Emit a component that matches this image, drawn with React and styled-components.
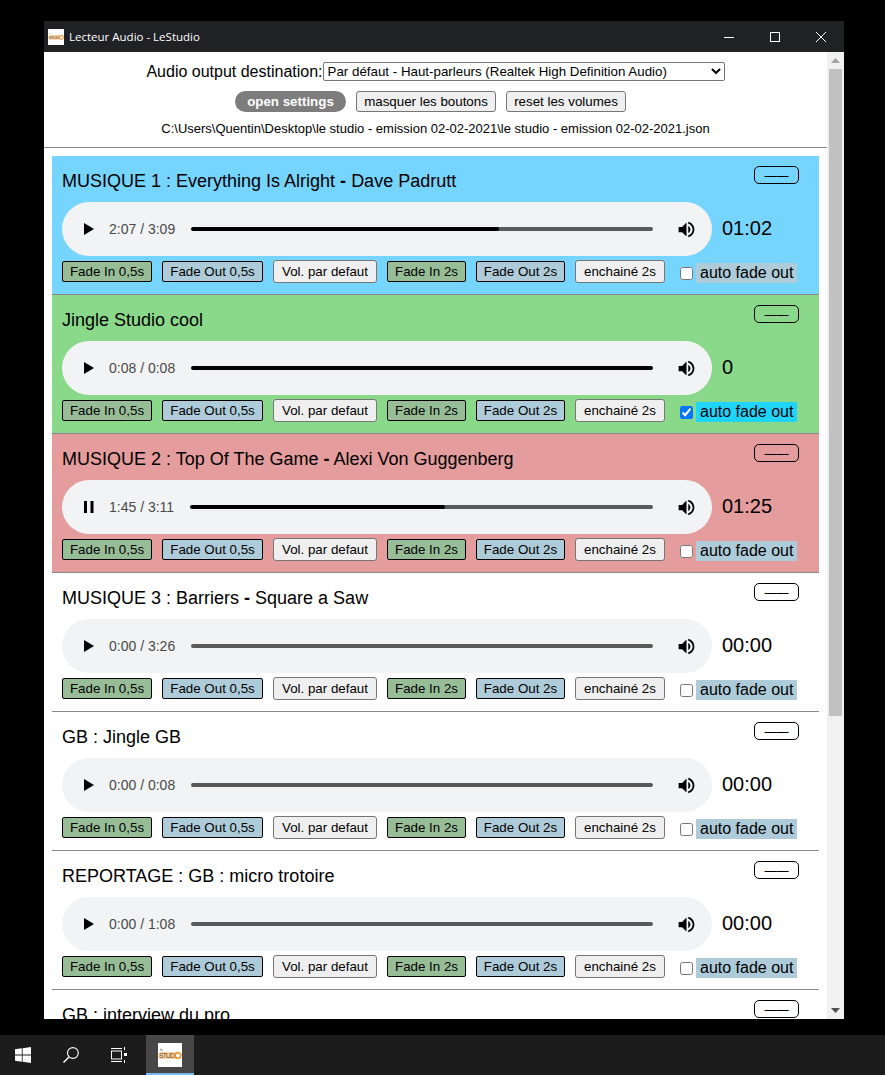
import React from 'react'
import styled, { createGlobalStyle } from 'styled-components'

const Global = createGlobalStyle`
html, body {
    margin: 0;
    padding: 0;
    background: #000;
    overflow: hidden;
}
* { box-sizing: border-box; }
`;

const Screen = styled.div`
width: 885px;
height: 1075px;
display: flex;
flex-direction: column;
background: #000;
font-family: "Liberation Sans", Arial, sans-serif;
color: #000;
`;

const Desktop = styled.div`
flex: 1;
min-height: 0;
padding: 21px 41px 16px 44px;
`;

const Win = styled.div`
height: 100%;
display: flex;
flex-direction: column;
background: #fff;
overflow: hidden;
`;

const TitleBar = styled.div`
height: 31px;
flex: none;
display: flex;
align-items: center;
padding-left: 4px;
background: #202124;
color: #fff;
font-family: "Open Sans", "Noto Sans", sans-serif;
font-size: 11.5px;
`;

const TitleText = styled.span`
margin-left: 5px;
flex: 1;
`;

const WinBtn = styled.div`
width: 46px;
height: 31px;
display: flex;
align-items: center;
justify-content: center;
`;

const LogoBox = styled.div`
width: ${p => p.$size}px;
height: ${p => p.$size}px;
background: #fff;
display: block;
flex: none;
`;

const Body = styled.div`
flex: 1;
min-height: 0;
display: flex;
`;

const Content = styled.div`
flex: 1;
min-width: 0;
overflow: hidden;
`;

const Header = styled.div`
display: flex;
flex-direction: column;
align-items: center;
padding-top: 10px;
height: 96px;
border-bottom: 1px solid #888;
`;

const OutputRow = styled.div`
display: flex;
align-items: center;
height: 19px;
font-size: 16px;
`;

const OutputSelect = styled.select`
width: 402px;
height: 19px;
font-family: "Liberation Sans", Arial, sans-serif;
font-size: 13.333px;
background: #fff;
border: 1px solid #767676;
border-radius: 2px;
padding: 0;
`;

const TopButtons = styled.div`
display: flex;
gap: 10px;
margin-top: 10px;
margin-right: 10px;
height: 21px;
`;

const SettingsBtn = styled.button`
width: 111px;
height: 21px;
padding: 0;
border: 0;
border-radius: 11px;
background: #7d7d7d;
color: #fff;
font-family: inherit;
font-size: 13.333px;
font-weight: bold;
`;

const GreyBtn = styled.button`
width: ${p => p.$w}px;
padding: 0;
height: ${p => p.$tall ? 23 : 21}px;
border: 1px solid #767676;
border-radius: 3px;
background: #efefef;
color: #000;
font-family: inherit;
font-size: 13.333px;
white-space: nowrap;
`;

const PathLine = styled.div`
margin-top: 10px;
font-size: 13px;
line-height: 14px;
white-space: nowrap;
`;

const List = styled.div`
padding: 8px 8px 0;
`;

const Track = styled.section`
height: 139px;
padding: 10px 20px 0 10px;
background: ${p => p.$bg || 'transparent'};
border-bottom: 1px solid #888;
`;

const TrackHead = styled.div`
display: flex;
justify-content: space-between;
height: 36px;
`;

const TrackTitle = styled.div`
padding-top: 5px;
font-size: 18px;
line-height: 21px;
`;

const Dash = styled.b`
font-weight: bold;
`;

const Collapse = styled.button`
width: 45px;
height: 18px;
padding: 1px 0 0;
background: transparent;
border: 1px solid #000;
border-radius: 5px;
color: #000;
font-family: inherit;
font-size: 12px;
line-height: 14px;
`;

const PlayerRow = styled.div`
display: flex;
align-items: center;
gap: 10px;
`;

const Player = styled.div`
width: 650px;
height: 54px;
display: flex;
align-items: center;
padding: 0 15px 0 21px;
border-radius: 27px;
background: #f1f3f4;
`;

const TimeText = styled.span`
margin-left: 14px;
font-size: 14px;
color: #4a4a4a;
white-space: nowrap;
`;

const Bar = styled.div`
flex: 1;
height: 4px;
margin: 0 23px 0 16px;
border-radius: 2px;
background: #595959;
overflow: hidden;
`;

const BarFill = styled.div`
height: 100%;
width: ${p => p.$value}%;
background: #000;
border-radius: 2px;
`;

const Elapsed = styled.div`
font-size: 20px;
margin-top: -2px;
`;

const Controls = styled.div`
display: flex;
align-items: center;
gap: 10px;
height: 23px;
margin-top: 4px;
`;

const FadeBtn = styled.button`
width: ${p => p.$w}px;
height: 21px;
padding: 0;
border: 1px solid #000;
border-radius: 2px;
background: ${p => p.$kind === 'in' ? '#97bd97' : '#aecbd9'};
color: #000;
font-family: inherit;
font-size: 13.333px;
white-space: nowrap;
`;

const AutoFade = styled.label`
display: flex;
align-items: center;
padding-top: 2px;
`;

const Check = styled.input`
width: 13px;
height: 13px;
margin: 2px 3px 0 5px;
`;

const AutoText = styled.span`
height: 20px;
padding: 0 4px;
font-size: 16px;
line-height: 20px;
white-space: nowrap;
background: ${p => p.$on ? '#1fd5ff' : '#aecbd9'};
`;

const Scrollbar = styled.div`
width: 17px;
flex: none;
display: flex;
flex-direction: column;
background: #f1f1f1;
`;

const ScrollArrow = styled.div`
height: 17px;
flex: none;
display: flex;
align-items: center;
justify-content: center;
`;

const ScrollTrack = styled.div`
flex: 1;
padding: 0 2px;
`;

const ScrollThumb = styled.div`
height: 647px;
background: #c1c1c1;
`;

const Taskbar = styled.div`
height: 40px;
flex: none;
display: flex;
background: #1c1c1c;
`;

const TaskCell = styled.div`
width: 48px;
height: 40px;
padding-right: 2px;
display: flex;
align-items: center;
justify-content: center;
`;

const ActiveCell = styled(TaskCell)`
margin-left: 2px;
padding-right: 0;
background: #474747;
border-bottom: 2px solid #76b9ed;
padding-top: 2px;
`;

function Logo({ size }) {
    return (
        <LogoBox $size={size}>
            <svg width={size} height={size} viewBox="0 0 24 24">
                <rect x="0.5" y="9" width="20" height="7" rx="3" fill="#fbd3a8" />
                <text x="2" y="8" fontSize="3.5" fontFamily="Liberation Sans" fill="#555">le</text>
                <text x="1" y="15" fontSize="6.5" fontFamily="Liberation Sans" fill="#6b4a26" textLength="17">STUDI</text>
                <circle cx="20" cy="12.5" r="2.8" fill="#fff" stroke="#ef8f2c" strokeWidth="1.6" />
            </svg>
        </LogoBox>
    )
}

function PlayIcon({ playing }) {
    if (playing) {
        return (
            <svg width="12" height="14" viewBox="0 0 12 14">
                <rect x="1" y="1" width="3" height="12" fill="#000" />
                <rect x="7.5" y="1" width="3" height="12" fill="#000" />
            </svg>
        )
    }
    return (
        <svg width="12" height="14" viewBox="0 0 12 14">
            <polygon points="1,1 11,7 1,13" fill="#000" />
        </svg>
    )
}

function VolumeIcon() {
    return (
        <svg width="21" height="21" viewBox="0 0 24 24" fill="#000">
            <path d="M3 9v6h4l5 5V4L7 9H3zm13.5 3c0-1.77-1.02-3.29-2.5-4.03v8.05c1.48-.73 2.5-2.25 2.5-4.02zM14 3.23v2.06c2.89.86 5 3.54 5 6.71s-2.11 5.85-5 6.71v2.06c4.01-.91 7-4.49 7-8.77s-2.99-7.86-7-8.77z" />
        </svg>
    )
}

const tracks = [
    { before: 'MUSIQUE 1 : Everything Is Alright', after: 'Dave Padrutt', time: '2:07 / 3:09', progress: 66.7, elapsed: '01:02', bg: '#75d5ff' },
    { before: 'Jingle Studio cool', time: '0:08 / 0:08', progress: 100, elapsed: '0', bg: '#8ad98a', auto: true },
    { before: 'MUSIQUE 2 : Top Of The Game', after: 'Alexi Von Guggenberg', time: '1:45 / 3:11', progress: 55, elapsed: '01:25', bg: '#e49c9c', playing: true },
    { before: 'MUSIQUE 3 : Barriers', after: 'Square a Saw', time: '0:00 / 3:26', progress: 0, elapsed: '00:00' },
    { before: 'GB : Jingle GB', time: '0:00 / 0:08', progress: 0, elapsed: '00:00' },
    { before: 'REPORTAGE : GB : micro trotoire', time: '0:00 / 1:08', progress: 0, elapsed: '00:00' },
    { before: 'GB : interview du pro', time: '0:00 / 2:14', progress: 0, elapsed: '00:00' },
]

function TrackRow({ track }) {
    return (
        <Track $bg={track.bg}>
            <TrackHead>
                <TrackTitle>
                    {track.before}
                    {track.after && <> <Dash>-</Dash> {track.after}</>}
                </TrackTitle>
                <Collapse>——</Collapse>
            </TrackHead>
            <PlayerRow>
                <Player>
                    <PlayIcon playing={track.playing} />
                    <TimeText>{track.time}</TimeText>
                    <Bar><BarFill $value={track.progress} /></Bar>
                    <VolumeIcon />
                </Player>
                <Elapsed>{track.elapsed}</Elapsed>
            </PlayerRow>
            <Controls>
                <FadeBtn $kind="in" $w={90}>Fade In 0,5s</FadeBtn>
                <FadeBtn $kind="out" $w={101}>Fade Out 0,5s</FadeBtn>
                <GreyBtn $tall $w={104}>Vol. par defaut</GreyBtn>
                <FadeBtn $kind="in" $w={79}>Fade In 2s</FadeBtn>
                <FadeBtn $kind="out" $w={89}>Fade Out 2s</FadeBtn>
                <GreyBtn $tall $w={90}>enchainé 2s</GreyBtn>
                <AutoFade>
                    <Check type="checkbox" defaultChecked={!!track.auto} />
                    <AutoText $on={track.auto}>auto fade out</AutoText>
                </AutoFade>
            </Controls>
        </Track>
    )
}

export default function App() {
    return (
        <Screen>
            <Global />
            <Desktop>
                <Win>
                    <TitleBar>
                        <Logo size={16} />
                        <TitleText>Lecteur Audio - LeStudio</TitleText>
                        <WinBtn>
                            <svg width="10" height="10" viewBox="0 0 10 10"><path d="M0 5.5h10" stroke="#fff" /></svg>
                        </WinBtn>
                        <WinBtn>
                            <svg width="10" height="10" viewBox="0 0 10 10"><rect x=".5" y=".5" width="9" height="9" fill="none" stroke="#fff" /></svg>
                        </WinBtn>
                        <WinBtn>
                            <svg width="10" height="10" viewBox="0 0 10 10"><path d="M0 0l10 10M10 0L0 10" stroke="#fff" /></svg>
                        </WinBtn>
                    </TitleBar>
                    <Body>
                        <Content>
                            <Header>
                                <OutputRow>
                                    Audio output destination:
                                    <OutputSelect defaultValue="default">
                                        <option value="default">Par défaut - Haut-parleurs (Realtek High Definition Audio)</option>
                                    </OutputSelect>
                                </OutputRow>
                                <TopButtons>
                                    <SettingsBtn>open settings</SettingsBtn>
                                    <GreyBtn $w={140}>masquer les boutons</GreyBtn>
                                    <GreyBtn $w={120}>reset les volumes</GreyBtn>
                                </TopButtons>
                                <PathLine>C:\Users\Quentin\Desktop\le studio - emission 02-02-2021\le studio - emission 02-02-2021.json</PathLine>
                            </Header>
                            <List>
                                {tracks.map(t => <TrackRow key={t.before} track={t} />)}
                            </List>
                        </Content>
                        <Scrollbar>
                            <ScrollArrow>
                                <svg width="9" height="5" viewBox="0 0 9 5"><polygon points="4.5,0 9,5 0,5" fill="#a3a3a3" /></svg>
                            </ScrollArrow>
                            <ScrollTrack><ScrollThumb /></ScrollTrack>
                            <ScrollArrow>
                                <svg width="9" height="5" viewBox="0 0 9 5"><polygon points="0,0 9,0 4.5,5" fill="#505050" /></svg>
                            </ScrollArrow>
                        </Scrollbar>
                    </Body>
                </Win>
            </Desktop>
            <Taskbar>
                <TaskCell>
                    <svg width="16" height="16" viewBox="0 0 16 16" fill="#fff">
                        <polygon points="0,2.3 6.8,1.3 6.8,7.6 0,7.6" />
                        <polygon points="7.6,1.2 16,0 16,7.6 7.6,7.6" />
                        <polygon points="0,8.4 6.8,8.4 6.8,14.7 0,13.7" />
                        <polygon points="7.6,8.4 16,8.4 16,16 7.6,14.8" />
                    </svg>
                </TaskCell>
                <TaskCell>
                    <svg width="16" height="16" viewBox="0 0 16 16" fill="none" stroke="#fff" strokeWidth="1.1">
                        <circle cx="9.9" cy="6" r="5.4" />
                        <path d="M6 10L.5 15.6" strokeWidth="1.4" />
                    </svg>
                </TaskCell>
                <TaskCell>
                    <svg width="16" height="16" viewBox="0 0 16 16" fill="none" stroke="#fff" strokeWidth="1">
                        <path d="M0 1.5h11M0 14.5h11" />
                        <rect x=".5" y="4" width="10" height="8" />
                        <path d="M13.5 0v3M13.5 13v3" />
                        <rect x="13" y="6" width="3" height="3" fill="#fff" stroke="none" />
                    </svg>
                </TaskCell>
                <ActiveCell>
                    <Logo size={24} />
                </ActiveCell>
            </Taskbar>
        </Screen>
    )
}
